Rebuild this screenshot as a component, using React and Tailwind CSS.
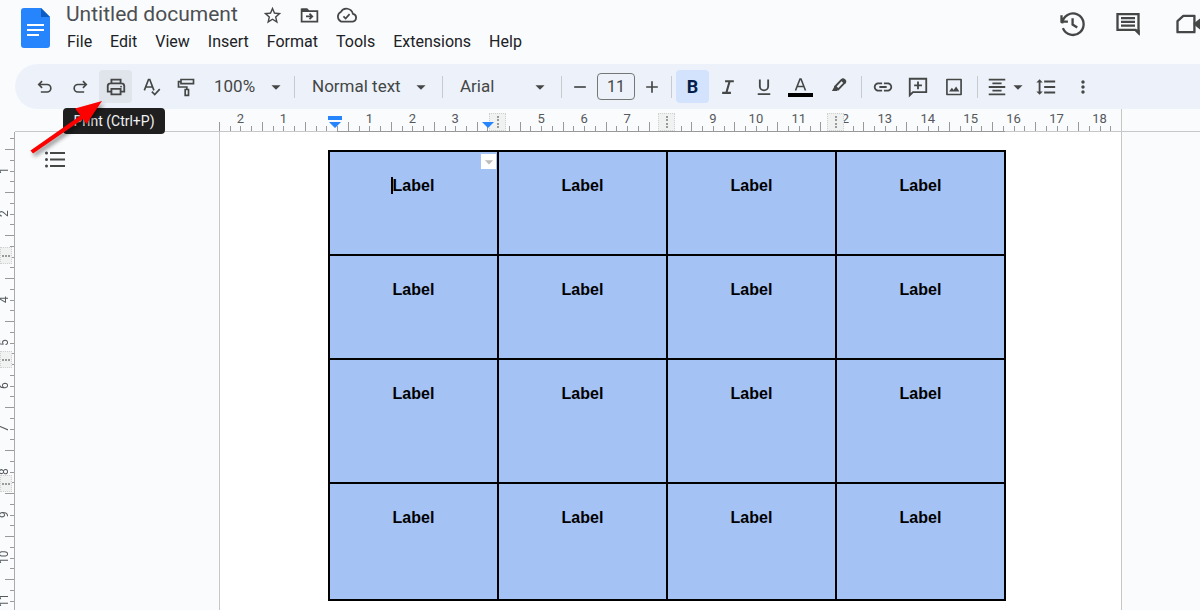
import {
  MdAdd,
  MdArrowDropDown,
  MdFormatAlignCenter,
  MdFormatLineSpacing,
  MdLink,
  MdMoreVert,
  MdRemove,
  MdStarOutline,
} from "react-icons/md";

const menus = ["File", "Edit", "View", "Insert", "Format", "Tools", "Extensions", "Help"];

const topMarks = [2, 1, "", 1, 2, 3, "", 5, 6, 7, "", 9, 10, 11, 12, 13, 14, 15, 16, 17, 18];

const sideMarks = [1, 2, "", 4, 5, 6, 7, 8, 9, 10, 11];

function Icon({ children, className = "size-5" }) {
  return (
    <svg
      viewBox="0 0 24 24"
      className={className}
      fill="none"
      stroke="currentColor"
      strokeWidth="2"
      aria-hidden="true"
    >
      {children}
    </svg>
  );
}

function DocsLogo() {
  return (
    <svg viewBox="0 0 30 40" className="h-10 w-[30px]" aria-hidden="true">
      <path d="M3 0h17l9 9v28a3 3 0 0 1-3 3H3a3 3 0 0 1-3-3V3a3 3 0 0 1 3-3z" fill="#2684fc" />
      <path d="M20 0l9 9h-9z" fill="#0d5cc4" />
      <path d="M6 16h17v2H6zM6 21h17v2H6zM6 26h12v2H6z" fill="#fff" />
    </svg>
  );
}

function ToolButton({ label, className = "", children }) {
  return (
    <button
      type="button"
      aria-label={label}
      className={`flex h-[33px] w-[33px] shrink-0 items-center justify-center rounded ${className}`}
    >
      {children}
    </button>
  );
}

function Divider() {
  return <div className="h-[22px] w-px shrink-0 bg-[#c7cbd1]" />;
}

function Header() {
  return (
    <header className="flex h-16 items-start pl-[21px]">
      <a href="#home" aria-label="Docs home" className="mt-2 shrink-0">
        <DocsLogo />
      </a>
      <div className="ml-[15px] flex-1">
        <div className="flex h-7 items-center">
          <h1 className="text-[21px] leading-7 text-[#4c4f52]">Untitled document</h1>
          <div className="ml-6 mt-0.5 flex items-center gap-4">
            <button type="button" aria-label="Star">
              <MdStarOutline className="size-[21px]" />
            </button>
            <button type="button" aria-label="Move">
              <Icon className="size-[21px]">
                <path d="M3 5h6l2 2h10v12H3zM8 13h7M12 9.800l3.200 3.200-3.200 3.200" />
                <path d="M3 4h6.500l2 2.500V8H3z" fill="currentColor" stroke="none" />
              </Icon>
            </button>
            <button type="button" aria-label="See document status">
              <Icon className="size-[21px]">
                <path d="M19.3 10.1A7.5 7.5 0 0 0 5.4 8.1 6 6 0 0 0 6 19h13a4.5 4.5 0 0 0 .3-8.900z" />
                <path d="M8.500 13l2.500 2.500 4.500-5" />
              </Icon>
            </button>
          </div>
        </div>
        <nav className="flex gap-[18px] pl-px text-base leading-7 text-[#202124]">
          {menus.map((m) => (
            <button key={m} type="button">
              {m}
            </button>
          ))}
        </nav>
      </div>
      <div className="-mr-0.5 mt-2.5 flex shrink-0 gap-7">
        <button type="button" aria-label="Version history">
          <Icon className="size-7">
            <path d="M3.600 11.500A9.200 9.200 0 1 1 4.200 15.500M3 4.500V10h5.500M12.500 7v5.500l4 2.500" />
          </Icon>
        </button>
        <button type="button" aria-label="Comments">
          <Icon className="size-7">
            <path d="M3 3.500h18v16l-2.500-2.500H3zM6 7h12M6 10.200h12M6 13.400h12" />
            <path d="M17 17h5v5z" fill="currentColor" stroke="none" />
          </Icon>
        </button>
        <button type="button" aria-label="Join a call" className="ml-1">
          <Icon className="size-7">
            <path d="M8 5h9.500v14H3v-9.500z" strokeLinejoin="round" />
            <path d="M18 12l5-4v8z" fill="currentColor" />
          </Icon>
        </button>
      </div>
    </header>
  );
}

function Toolbar() {
  return (
    <div
      role="toolbar"
      className="ml-[15px] flex h-[45px] items-center rounded-l-full bg-[#edf2fa] pl-[13px] text-[17px]"
    >
      <ToolButton label="Undo">
        <Icon>
          <path d="M8.500 5L4.500 9l4 4M5 9h9.500a4.500 4.500 0 0 1 0 9H7" />
        </Icon>
      </ToolButton>
      <ToolButton label="Redo" className="ml-[2px]">
        <Icon>
          <path d="M15.500 5l4 4-4 4M19 9H9.500a4.500 4.500 0 0 0 0 9H17" />
        </Icon>
      </ToolButton>
      <div className="relative ml-[3px]">
        <ToolButton label="Print" className="bg-[#e0e4eb]">
          <Icon className="size-[22px]">
            <path d="M7 8V4h10v4M6.500 17H3v-6a3 3 0 0 1 3-3h12a3 3 0 0 1 3 3v6h-3.500M7 14h10v6H7z" />
            <circle cx="17.500" cy="11.500" r="1" fill="currentColor" stroke="none" />
          </Icon>
        </ToolButton>
        <div
          role="tooltip"
          className="absolute -left-9 top-[38px] z-10 h-[26px] w-[102px] rounded bg-[#1f1f1f] text-center text-sm leading-[26px] text-[#f1f3f4]"
        >
          Print (Ctrl+P)
        </div>
        <svg
          viewBox="0 0 80 60"
          className="pointer-events-none absolute -left-[71px] top-[30px] z-20 h-[60px] w-20 max-w-none drop-shadow-[2px_3px_2px_rgba(0,0,0,0.45)]"
          aria-hidden="true"
        >
          <path d="M2.500 50.500L52.500 15.500 47 8.500 74 1 58.500 24 55 19 5 53.500z" fill="#fd0000" />
        </svg>
      </div>
      <ToolButton label="Spelling and grammar check" className="ml-[2px]">
        <Icon>
          <path d="M4 16L9 3h1.500l5 13M5.500 12h8.500M13 17.500l3.500 3.500 6-6.500" />
        </Icon>
      </ToolButton>
      <ToolButton label="Paint format" className="ml-[2px]">
        <Icon>
          <path d="M6 3h15v5H6zM6 5.500H3V12h10v3M11 15h4v7h-4z" />
        </Icon>
      </ToolButton>
      <button type="button" className="ml-3 flex items-center">
        <span className="w-[51px] text-left">100%</span>
        <MdArrowDropDown className="size-[22px]" />
      </button>
      <div className="w-[7px]" />
      <Divider />
      <button type="button" className="ml-[17px] flex items-center">
        <span className="w-[98px] text-left">Normal text</span>
        <MdArrowDropDown className="size-[22px]" />
      </button>
      <div className="w-[10px]" />
      <Divider />
      <button type="button" className="ml-[17px] flex items-center">
        <span className="w-[69px] text-left">Arial</span>
        <MdArrowDropDown className="size-[22px]" />
      </button>
      <div className="w-[10px]" />
      <Divider />
      <button type="button" aria-label="Decrease font size" className="ml-2">
        <MdRemove className="size-5" />
      </button>
      <input
        aria-label="Font size"
        defaultValue="11"
        className="mx-[7px] h-[27px] w-[38px] shrink-0 rounded border border-[#747775] text-center text-base"
      />
      <button type="button" aria-label="Increase font size">
        <MdAdd className="size-5" />
      </button>
      <div className="w-[9px]" />
      <Divider />
      <ToolButton label="Bold" className="ml-1 bg-[#d3e3fd] text-lg font-bold text-[#041e49]">
        B
      </ToolButton>
      <ToolButton label="Italic" className="ml-[2px]">
        <Icon>
          <path d="M8.500 5H19M5 19h10.500M14 5l-4 14" strokeWidth="2.500" />
        </Icon>
      </ToolButton>
      <ToolButton label="Underline" className="ml-[3px]">
        <Icon>
          <path d="M7 3v8a5 5 0 0 0 10 0V3M4.500 20.500h15" strokeWidth="2.200" />
        </Icon>
      </ToolButton>
      <ToolButton label="Text color" className="ml-1">
        <svg viewBox="0 0 25 22" className="h-[22px] w-[25px]" fill="none" aria-hidden="true">
          <path d="M7.500 14.500L12 3h1l4.500 11.500M9 10.500h7" stroke="currentColor" strokeWidth="1.600" />
          <path d="M0 17h25v4H0z" fill="#000" />
        </svg>
      </ToolButton>
      <ToolButton label="Highlight color" className="mb-1 ml-[5px]">
        <Icon className="size-[18px]">
          <path d="M7 14L15 5.500a3 3 0 0 1 4 0 3 3 0 0 1 0 4L11 18z" strokeWidth="2.500" />
          <path d="M14 5.500a4 4 0 0 1 6.500-1 4 4 0 0 1-1 6.500zM6.500 13l5 5-2.500 2H2.500z" fill="currentColor" stroke="none" />
        </Icon>
      </ToolButton>
      <div className="w-[6px]" />
      <Divider />
      <ToolButton label="Insert link" className="ml-1">
        <MdLink className="size-[22px]" />
      </ToolButton>
      <ToolButton label="Add comment" className="ml-[2px]">
        <Icon className="size-[22px]">
          <path d="M3 21V3h18v14.500H6.500zM12 6v8.500M7.800 10.200h8.500" />
        </Icon>
      </ToolButton>
      <ToolButton label="Insert image" className="ml-[3px]">
        <Icon>
          <path d="M3.500 3h17v18h-17z" strokeLinejoin="round" />
          <path d="M6 17.500l3.500-4.500 2 2.500 3-4 4 6z" fill="currentColor" stroke="none" />
        </Icon>
      </ToolButton>
      <div className="w-[7px]" />
      <Divider />
      <button type="button" aria-label="Align" className="ml-2 flex items-center">
        <MdFormatAlignCenter className="size-[22px]" />
        <MdArrowDropDown className="-ml-px size-[22px]" />
      </button>
      <ToolButton label="Line spacing">
        <MdFormatLineSpacing className="size-[22px]" />
      </ToolButton>
      <ToolButton label="More" className="ml-1">
        <MdMoreVert className="size-5" />
      </ToolButton>
    </div>
  );
}

function TopHandle({ className }) {
  return (
    <div
      className={`absolute top-1 flex h-[18px] w-[17px] flex-col items-center justify-evenly border border-dotted border-[#d0d0d0] bg-[#f0f1f1] ${className}`}
    >
      {[0, 1, 2, 3].map((d) => (
        <div key={d} className="h-0.5 w-0.5 bg-[#9a9a9a]" />
      ))}
    </div>
  );
}

function TopRuler() {
  return (
    <div className="flex h-[23px] pl-[15px]">
      <div className="w-51 shrink-0 border-b border-[#c7c7c7]" />
      <div className="relative flex flex-1 border-b border-r border-[#c7c7c7]">
        {topMarks.map((n, i) => (
          <div key={i} className="flex min-w-0 flex-1 flex-col">
            <span className="block h-[13px] text-center text-[13px] leading-5 text-[#55585c]">{n}</span>
            <div className="flex flex-1 items-end">
              <div className="h-full flex-1 border-l border-[#999]" />
              <div className="h-[5px] flex-1 border-l border-[#999]" />
              <div className="h-[5px] flex-1 border-l border-[#999]" />
              <div className="h-[5px] flex-1 border-l border-[#999]" />
            </div>
          </div>
        ))}
        <div className="absolute -bottom-px left-[118px] right-[116px] h-px bg-[#999]" />
        <svg viewBox="0 0 16 12" className="absolute left-[108px] top-[7px] h-3 w-4" aria-hidden="true">
          <path d="M1 0h14v4H1zM2 6h12l-6 6z" fill="#2684fc" />
        </svg>
        <TopHandle className="left-[270px]" />
        <TopHandle className="left-[439px]" />
        <TopHandle className="left-[608px]" />
        <svg viewBox="0 0 12 6" className="absolute left-[263px] top-[13px] h-1.5 w-3" aria-hidden="true">
          <path d="M0 0h12L6 6z" fill="#2684fc" />
        </svg>
      </div>
      <div className="w-[78px] shrink-0 border-b border-[#c7c7c7]" />
    </div>
  );
}

function SideHandle({ className }) {
  return (
    <div
      className={`absolute left-0 flex h-[17px] w-3 items-center justify-evenly border border-dotted border-[#d0d0d0] bg-[#f0f1f1] ${className}`}
    >
      {[0, 1, 2].map((d) => (
        <div key={d} className="h-0.5 w-0.5 bg-[#9a9a9a]" />
      ))}
    </div>
  );
}

function SideRuler() {
  return (
    <div className="relative w-[15px] shrink-0 overflow-hidden border-r border-[#aaa]">
      <div className="absolute inset-x-0 top-0 flex flex-col">
        <div className="flex h-[17px] flex-col items-end">
          <div className="mt-1.5 w-1 border-t border-[#999]" />
        </div>
        {sideMarks.map((n, i) => (
          <div key={i} className="flex h-[43px]">
            <span className="-mr-1 flex w-[9px] rotate-180 items-center justify-center text-xs leading-[9px] text-[#55585c] [writing-mode:vertical-rl]">
              {n}
            </span>
            <div className="flex flex-1 flex-col items-end">
              <div className="w-full flex-1 border-t border-[#999]" />
              <div className="w-1 flex-1 border-t border-[#999]" />
              <div className="w-1 flex-1 border-t border-[#999]" />
              <div className="w-1 flex-1 border-t border-[#999]" />
            </div>
          </div>
        ))}
      </div>
      <SideHandle className="top-[115px]" />
      <SideHandle className="top-[219px]" />
      <SideHandle className="top-[343px]" />
    </div>
  );
}

function LabelRow({ height, first }) {
  return (
    <tr className={height}>
      {[0, 1, 2, 3].map((c) => (
        <td
          key={c}
          className="relative border-2 border-black bg-[#a4c2f4] pt-6 text-center align-top font-['Liberation_Sans',Arial,sans-serif] text-base leading-5 font-bold text-black"
        >
          {first && c === 0 ? (
            <>
              <span className="-ml-0.5 border-l-2 border-black">Label</span>
              <button
                type="button"
                aria-label="Cell options"
                className="absolute right-px top-[2px] flex size-[15px] items-center justify-center bg-white text-[#bdbdbd]"
              >
                <MdArrowDropDown className="size-5 shrink-0" />
              </button>
            </>
          ) : (
            "Label"
          )}
        </td>
      ))}
    </tr>
  );
}

export default function App() {
  return (
    <div className="flex h-screen min-w-[1120px] flex-col overflow-hidden bg-[#f9fbfd] font-[Roboto,sans-serif] text-[#444746]">
      <Header />
      <Toolbar />
      <TopRuler />
      <div className="flex min-h-0 flex-1">
        <SideRuler />
        <aside className="w-51 shrink-0 pl-[30px] pt-[19px]">
          <button type="button" aria-label="Show outline" className="block">
            <svg viewBox="0 0 20 17" className="h-[17px] w-5" fill="currentColor" aria-hidden="true">
              <path d="M5 1h15v2H5zM5 7.500h15v2H5zM5 14h15v2H5z" />
              <circle cx="1.500" cy="2" r="1.500" />
              <circle cx="1.500" cy="8.500" r="1.500" />
              <circle cx="1.500" cy="15" r="1.500" />
            </svg>
          </button>
        </aside>
        <main className="flex-1 overflow-hidden border-x border-[#c7c7c7] bg-white pl-[108px] pr-[115px] pt-[18px]">
          <table className="w-full table-fixed border-collapse">
            <tbody>
              <LabelRow height="h-[104px]" first />
              <LabelRow height="h-[104px]" />
              <LabelRow height="h-[124px]" />
              <LabelRow height="h-[117px]" />
            </tbody>
          </table>
        </main>
        <div className="w-[78px] shrink-0" />
      </div>
    </div>
  );
}
